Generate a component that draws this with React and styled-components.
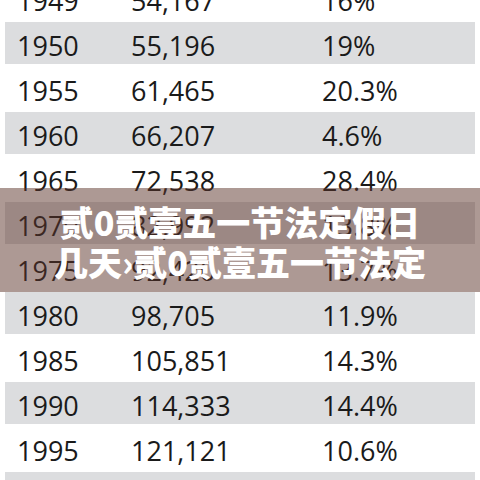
import React from "react";
import styled, { createGlobalStyle } from "styled-components";

const rows = [
  ["1949", "54,167", "16%"],
  ["1950", "55,196", "19%"],
  ["1955", "61,465", "20.3%"],
  ["1960", "66,207", "4.6%"],
  ["1965", "72,538", "28.4%"],
  ["1970", "82,992", "13.8%"],
  ["1975", "92,420", "13.7%"],
  ["1980", "98,705", "11.9%"],
  ["1985", "105,851", "14.3%"],
  ["1990", "114,333", "14.4%"],
  ["1995", "121,121", "10.6%"],
  ["2000", "126,743", "8.9%"],
];

const App = () => {
  return (
    <Wrapper>
      <GlobalStyle />
      <Table>
        {rows.map((r, i) => (
          <Row key={r[0]} $shaded={i % 2 === 1}>
            <Cell>{r[0]}</Cell>
            <Cell>{r[1]}</Cell>
            <Cell>{r[2]}</Cell>
          </Row>
        ))}
      </Table>
      <TitleBand>
        <TitleLine>贰0贰壹五一节法定假日</TitleLine>
        <TitleLine>几天›贰0贰壹五一节法定</TitleLine>
      </TitleBand>
    </Wrapper>
  );
};

const GlobalStyle = createGlobalStyle`
  html, body {
    margin: 0;
    padding: 0;
    background: #ffffff;
  }
`;

const Wrapper = styled.div`
  position: relative;
  width: 480px;
  height: 480px;
  overflow: hidden;
  background: #ffffff;
`;

const Table = styled.div`
  margin-top: -24.5px;
  display: flex;
  flex-direction: column;
`;

const Row = styled.div`
  height: 42px;
  margin: 1.5px 5px;
  padding-left: 12px;
  display: grid;
  grid-template-columns: 114px 191px 1fr;
  background: ${(p) => (p.$shaded ? "#dcdddf" : "transparent")};
`;

const Cell = styled.div`
  padding-top: 6px;
  line-height: 36px;
  font-family: "Open Sans", "Liberation Sans", sans-serif;
  font-size: 27px;
  color: #1a1a1a;
  white-space: nowrap;
`;

const TitleBand = styled.div`
  position: absolute;
  top: 188px;
  left: 0;
  right: 0;
  height: 104px;
  padding-top: 14px;
  box-sizing: border-box;
  background: rgba(92, 52, 42, 0.5);
  display: flex;
  flex-direction: column;
  align-items: center;
`;

const TitleLine = styled.span`
  display: block;
  font-family: "Noto Sans CJK SC", "Noto Sans", sans-serif;
  font-weight: 900;
  font-size: 34px;
  line-height: 40px;
  color: #ffffff;
  white-space: nowrap;
`;

export default App;
